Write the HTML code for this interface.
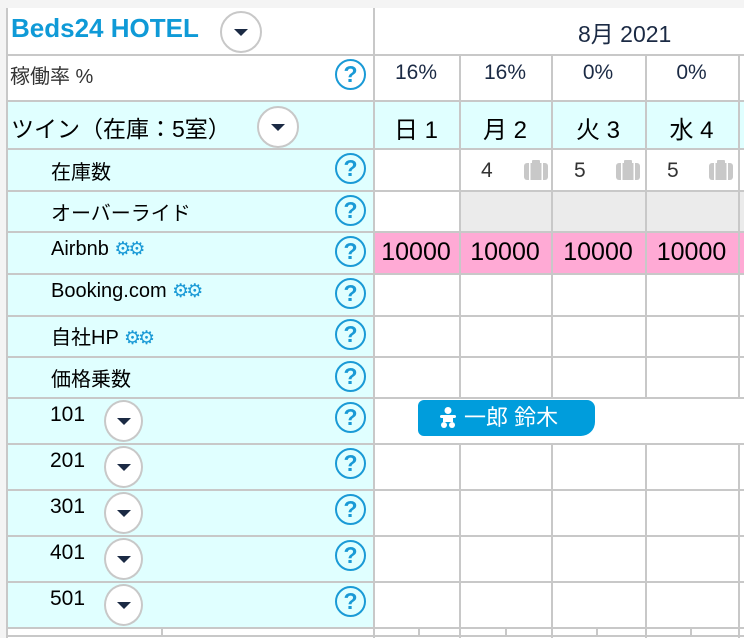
<!DOCTYPE html>
<html><head><meta charset="utf-8"><style>
body{margin:0;width:744px;height:638px;background:#f4f4f4;position:relative;overflow:hidden;font-family:"Liberation Sans","Noto Sans CJK JP",sans-serif;}
.a{position:absolute}
.h{position:absolute;left:7px;width:737px;height:2px;background:#c8c8c8}
.v{position:absolute;width:2px;background:#c8c8c8}
.t{position:absolute;white-space:nowrap}
.q{position:absolute;width:27px;height:27px;border:2px solid #1a9ad6;border-radius:50%;color:#1a9ad6;font-weight:bold;font-size:23px;line-height:27px;text-align:center}
.dd{position:absolute;border:2px solid #c8c8c8;border-radius:50%;background:#fff}
.dd:after{content:"";position:absolute;left:50%;top:50%;margin-left:-7px;margin-top:-3px;border-left:7px solid transparent;border-right:7px solid transparent;border-top:7px solid #1b2a44}
.c{position:absolute;text-align:center;font-size:21px}
.g{color:#1a9ad6;font-size:19px;letter-spacing:-3px}
.bc{position:absolute;width:24px;height:20px}
</style></head><body>
<div class="a" style="left:7px;top:8px;width:737px;height:630px;background:#fff"></div>
<div class="a" style="left:7px;top:100px;width:366px;height:527px;background:#e0ffff"></div>
<div class="a" style="left:373px;top:100px;width:371px;height:48px;background:#e0ffff"></div>
<div class="a" style="left:459px;top:190px;width:285px;height:41px;background:#ebebeb"></div>
<div class="a" style="left:373px;top:231px;width:371px;height:42px;background:#ffaad5"></div>

<div class="h" style="top:54px"></div><div class="h" style="top:100px"></div><div class="h" style="top:148px"></div>
<div class="h" style="top:190px"></div><div class="h" style="top:231px"></div><div class="h" style="top:273px"></div>
<div class="h" style="top:315px"></div><div class="h" style="top:356px"></div><div class="h" style="top:397px"></div>
<div class="h" style="top:443px"></div><div class="h" style="top:489px"></div><div class="h" style="top:535px"></div>
<div class="h" style="top:581px"></div><div class="h" style="top:627px"></div><div class="h" style="top:635px"></div>

<div class="v" style="left:6px;top:8px;height:630px"></div>
<div class="v" style="left:373px;top:8px;height:630px"></div>
<div class="v" style="left:459px;top:54px;height:343px"></div><div class="v" style="left:459px;top:443px;height:195px"></div>
<div class="v" style="left:551px;top:54px;height:343px"></div><div class="v" style="left:551px;top:443px;height:195px"></div>
<div class="v" style="left:645px;top:54px;height:343px"></div><div class="v" style="left:645px;top:443px;height:195px"></div>
<div class="v" style="left:738px;top:54px;height:343px"></div><div class="v" style="left:738px;top:443px;height:195px"></div>
<div class="v" style="left:161px;top:627px;height:10px"></div><div class="v" style="left:418px;top:627px;height:10px"></div>
<div class="v" style="left:505px;top:627px;height:10px"></div><div class="v" style="left:596px;top:627px;height:10px"></div>
<div class="v" style="left:690px;top:627px;height:10px"></div>

<div class="t" style="left:11px;top:13px;font-size:26px;font-weight:bold;color:#0f9ad7">Beds24 HOTEL</div>
<div class="dd" style="left:220px;top:11px;width:38px;height:38px"></div>
<div class="t" style="left:578px;top:15px;font-size:23px;color:#1b2a44">8月 2021</div>

<div class="t" style="left:10px;top:60px;font-size:20px;color:#333">稼働率 %</div>
<div class="q" style="left:335px;top:59px">?</div>
<div class="c" style="left:373px;width:86px;top:61px;color:#1b2a44">16%</div>
<div class="c" style="left:459px;width:92px;top:61px;color:#1b2a44">16%</div>
<div class="c" style="left:551px;width:94px;top:61px;color:#1b2a44">0%</div>
<div class="c" style="left:645px;width:93px;top:61px;color:#1b2a44">0%</div>

<div class="t" style="left:11px;top:110px;font-size:23px">ツイン（在庫：5室）</div>
<div class="dd" style="left:257px;top:106px;width:38px;height:38px"></div>
<div class="c" style="left:373px;width:86px;top:110px;font-size:24px">日 1</div>
<div class="c" style="left:459px;width:92px;top:110px;font-size:24px">月 2</div>
<div class="c" style="left:551px;width:94px;top:110px;font-size:24px">火 3</div>
<div class="c" style="left:645px;width:93px;top:110px;font-size:24px">水 4</div>

<div class="t" style="left:51px;top:156px;font-size:20px">在庫数</div><div class="q" style="left:335px;top:153px">?</div>
<div class="t" style="left:481px;top:159px;font-size:21px;color:#333">4</div>
<div class="t" style="left:574px;top:159px;font-size:21px;color:#333">5</div>
<div class="t" style="left:667px;top:159px;font-size:21px;color:#333">5</div>
<svg class="bc" style="left:524px;top:160px" viewBox="0 0 24 20" fill="#c8c8c8"><rect x="0" y="3" width="24" height="17" rx="3"/><rect x="8" y="0" width="8" height="4" rx="1"/><rect x="5" y="3" width="1.5" height="17" fill="#fff"/><rect x="17.5" y="3" width="1.5" height="17" fill="#fff"/></svg>
<svg class="bc" style="left:616px;top:160px" viewBox="0 0 24 20" fill="#c8c8c8"><rect x="0" y="3" width="24" height="17" rx="3"/><rect x="8" y="0" width="8" height="4" rx="1"/><rect x="5" y="3" width="1.5" height="17" fill="#fff"/><rect x="17.5" y="3" width="1.5" height="17" fill="#fff"/></svg>
<svg class="bc" style="left:709px;top:160px" viewBox="0 0 24 20" fill="#c8c8c8"><rect x="0" y="3" width="24" height="17" rx="3"/><rect x="8" y="0" width="8" height="4" rx="1"/><rect x="5" y="3" width="1.5" height="17" fill="#fff"/><rect x="17.5" y="3" width="1.5" height="17" fill="#fff"/></svg>

<div class="t" style="left:51px;top:197px;font-size:20px">オーバーライド</div><div class="q" style="left:335px;top:195px">?</div>
<div class="t" style="left:51px;top:238px;font-size:20px">Airbnb <span class="g">⚙⚙</span></div><div class="q" style="left:335px;top:236px">?</div>
<div class="t" style="left:51px;top:280px;font-size:20px">Booking.com <span class="g">⚙⚙</span></div><div class="q" style="left:335px;top:278px">?</div>
<div class="t" style="left:51px;top:321px;font-size:20px">自社HP <span class="g">⚙⚙</span></div><div class="q" style="left:335px;top:319px">?</div>
<div class="t" style="left:51px;top:363px;font-size:20px">価格乗数</div><div class="q" style="left:335px;top:361px">?</div>

<div class="c" style="left:373px;width:86px;top:238px;font-size:25px">10000</div>
<div class="c" style="left:459px;width:92px;top:238px;font-size:25px">10000</div>
<div class="c" style="left:551px;width:94px;top:238px;font-size:25px">10000</div>
<div class="c" style="left:645px;width:93px;top:238px;font-size:25px">10000</div>

<div class="t" style="left:50px;top:403px;font-size:21px">101</div><div class="dd" style="left:104px;top:400px;width:35px;height:38px"></div><div class="q" style="left:335px;top:402px">?</div>
<div class="t" style="left:50px;top:449px;font-size:21px">201</div><div class="dd" style="left:104px;top:446px;width:35px;height:38px"></div><div class="q" style="left:335px;top:448px">?</div>
<div class="t" style="left:50px;top:495px;font-size:21px">301</div><div class="dd" style="left:104px;top:492px;width:35px;height:38px"></div><div class="q" style="left:335px;top:494px">?</div>
<div class="t" style="left:50px;top:541px;font-size:21px">401</div><div class="dd" style="left:104px;top:538px;width:35px;height:38px"></div><div class="q" style="left:335px;top:540px">?</div>
<div class="t" style="left:50px;top:587px;font-size:21px">501</div><div class="dd" style="left:104px;top:584px;width:35px;height:38px"></div><div class="q" style="left:335px;top:586px">?</div>

<div class="a" style="left:418px;top:400px;width:177px;height:36px;background:#009ddc;border-radius:6px 8px 14px 6px;color:#fff;font-size:22px;line-height:36px">
<svg class="a" style="left:22px;top:7px" width="16" height="22" viewBox="0 0 16 22" fill="#fff"><circle cx="8" cy="3.5" r="3.5"/><rect x="0" y="8" width="16" height="3" rx="1.5"/><rect x="3" y="9" width="10" height="6"/><circle cx="4" cy="18" r="3"/><circle cx="12" cy="18" r="3"/></svg>
<span class="a" style="left:46px;top:0">一郎 鈴木</span></div>
</body></html>
